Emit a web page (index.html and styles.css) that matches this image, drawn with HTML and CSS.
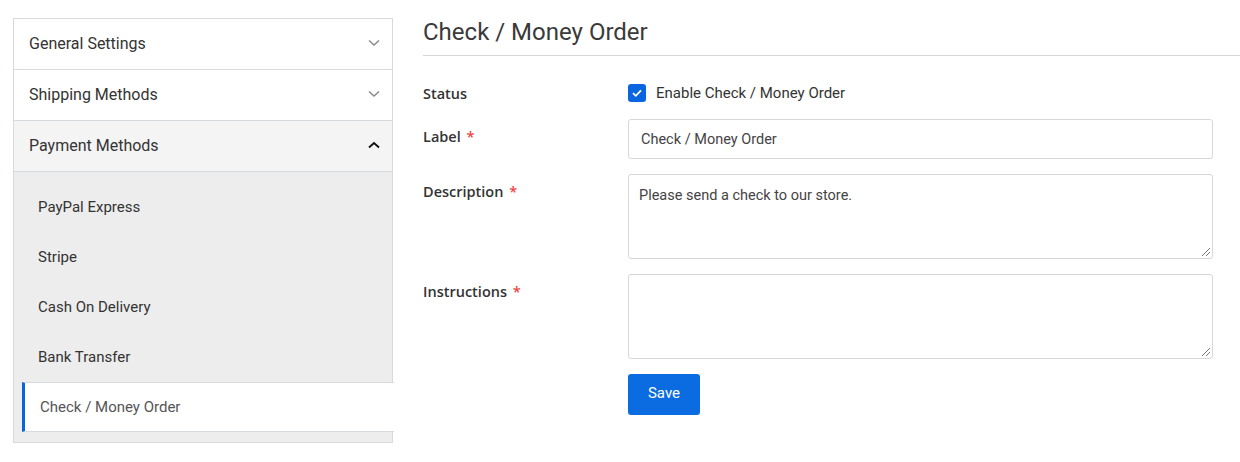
FILE: index.html
```html
<!DOCTYPE html>
<html lang="en">
<head>
<meta charset="utf-8">
<title>Check / Money Order</title>
<link rel="stylesheet" href="styles.css">
</head>
<body>
<div class="page">
  <aside class="sidebar">
    <div class="acc-head">
      <span>General Settings</span>
      <svg class="chev chev-closed" width="12" height="8" viewBox="0 0 12 8"><path d="M1 1.5 L6 6 L11 1.5" fill="none" stroke="currentColor" stroke-width="1.5"/></svg>
    </div>
    <div class="acc-head">
      <span>Shipping Methods</span>
      <svg class="chev chev-closed" width="12" height="8" viewBox="0 0 12 8"><path d="M1 1.5 L6 6 L11 1.5" fill="none" stroke="currentColor" stroke-width="1.5"/></svg>
    </div>
    <div class="acc-head open">
      <span>Payment Methods</span>
      <svg class="chev chev-open" width="12" height="8" viewBox="0 0 12 8"><path d="M1 6.5 L6 2 L11 6.5" fill="none" stroke="currentColor" stroke-width="1.8"/></svg>
    </div>
    <div class="submenu">
      <div class="sub-item">PayPal Express</div>
      <div class="sub-item">Stripe</div>
      <div class="sub-item">Cash On Delivery</div>
      <div class="sub-item">Bank Transfer</div>
      <div class="sub-item active">Check / Money Order</div>
    </div>
  </aside>
  <main class="main">
    <h1 class="title">Check / Money Order</h1>
    <form class="form">
      <div class="row row-status">
        <div class="label">Status</div>
        <label class="check">
          <span class="box"><svg width="12" height="10" viewBox="0 0 12 10"><path d="M2 5.2 L4.8 7.8 L10 2.4" fill="none" stroke="#fff" stroke-width="1.8"/></svg></span>
          <span>Enable Check / Money Order</span>
        </label>
      </div>
      <div class="row">
        <div class="label lab-pad">Label <span class="req">*</span></div>
        <div class="input">Check / Money Order</div>
      </div>
      <div class="row">
        <div class="label lab-pad">Description <span class="req">*</span></div>
        <div class="textarea">Please send a check to our store.<span class="grip"></span></div>
      </div>
      <div class="row">
        <div class="label lab-pad">Instructions <span class="req">*</span></div>
        <div class="textarea"><span class="grip"></span></div>
      </div>
      <div class="row">
        <div></div>
        <div><button type="button" class="save">Save</button></div>
      </div>
    </form>
  </main>
</div>
</body>
</html>
```
FILE: styles.css
```css
* { box-sizing: border-box; }
html, body { margin: 0; background: #fff; }
body { font-family: Roboto, "Liberation Sans", sans-serif; color: #333; }

.page {
  display: flex;
  align-items: flex-start;
  padding: 18px 0 0 13px;
  gap: 30px;
}

.sidebar {
  width: 380px;
  flex: none;
  border: 1px solid #d6d9df;
}

.acc-head {
  height: 51px;
  display: flex;
  align-items: center;
  justify-content: space-between;
  padding: 0 12px 2px 15px;
  border-bottom: 1px solid #d6d9df;
  font-size: 16px;
  color: #333;
  background: #fff;
}
.acc-head.open { background: #f4f4f4; }
.chev-closed { color: #8a8a8e; }
.chev-open { color: #111; }

.submenu {
  background: #ededed;
  padding: 10px 0 10px 8px;
}
.sub-item {
  height: 50px;
  display: flex;
  align-items: center;
  padding-left: 16px;
  font-size: 15px;
  color: #333;
}
.sub-item.active {
  background: #fff;
  border-left: 3px solid #0a66e0;
  border-top: 1px solid #d6d9df;
  border-bottom: 1px solid #d6d9df;
  margin-right: -2px;
  padding-left: 15px;
  color: #555;
}

.main { flex: 1; }
.title {
  margin: 0;
  font-size: 24px;
  font-weight: 400;
  line-height: 28px;
  color: #3a3a3a;
  padding-bottom: 9px;
  border-bottom: 1px solid #d6d6da;
}

.form { padding-top: 27px; }
.row {
  display: grid;
  grid-template-columns: 205px 585px;
  margin-bottom: 15px;
}
.row-status { height: 22px; align-items: center; margin-bottom: 14px; }
.label {
  font-family: "Open Sans", "Liberation Sans", sans-serif;
  font-weight: 600;
  font-size: 14.5px;
  color: #333;
  line-height: 20px;
}
.lab-pad { padding-top: 8px; }
.req { color: #ef4444; margin-left: 2px; }

.check {
  display: flex;
  align-items: center;
  gap: 10px;
  font-size: 15px;
  color: #333;
  margin-top: -2px;
}
.box {
  width: 18px;
  height: 18px;
  border-radius: 3px;
  background: #0a66e0;
  display: flex;
  align-items: center;
  justify-content: center;
}

.input {
  height: 40px;
  border: 1px solid #d8d8d8;
  border-radius: 3px;
  padding: 0 12px;
  display: flex;
  align-items: center;
  font-size: 14.5px;
  color: #444;
}
.textarea {
  position: relative;
  height: 85px;
  border: 1px solid #d8d8d8;
  border-radius: 3px;
  padding: 12px 10px;
  font-size: 14.5px;
  color: #444;
  line-height: 18px;
}
.grip {
  position: absolute;
  right: 2px;
  bottom: 2px;
  width: 8px;
  height: 8px;
  background: linear-gradient(135deg, transparent 45%, #777 45%, #777 52%, transparent 52%, transparent 72%, #777 72%, #777 80%, transparent 80%);
}

.save {
  width: 72px;
  height: 41px;
  border: 0;
  border-radius: 3px;
  background: #0a6ce0;
  color: #fff;
  font-family: Roboto, "Liberation Sans", sans-serif;
  font-size: 15px;
  line-height: 1;
  padding: 0 0 2px;
}
```
